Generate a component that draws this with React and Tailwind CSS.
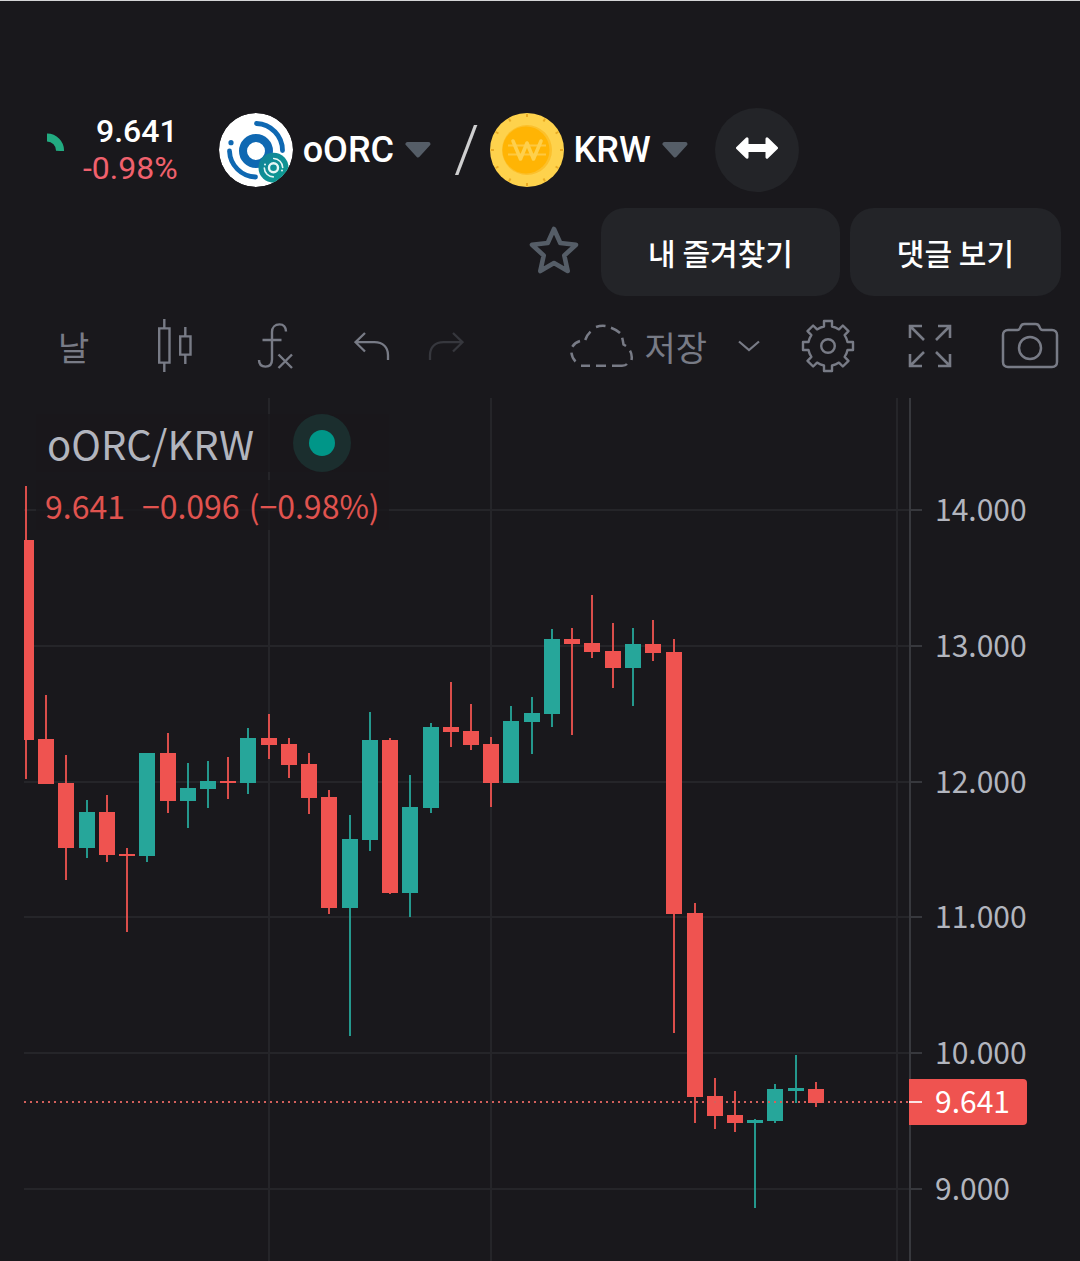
import { useState } from "react";

// [x, high, bodyTop, bodyBottom, low, rising]
const CANDLES = [
  [26, 486, 540, 740, 779, 0],
  [46, 695, 739, 784, 784, 0],
  [66, 755, 783, 848, 880, 0],
  [87, 800, 812, 848, 858, 1],
  [107, 795, 812, 855, 862, 0],
  [127, 848, 854, 856, 932, 0],
  [147, 753, 753, 856, 862, 1],
  [168, 733, 753, 801, 813, 0],
  [188, 763, 788, 801, 828, 1],
  [208, 761, 781, 789, 808, 1],
  [228, 757, 781, 783, 799, 0],
  [248, 728, 738, 783, 794, 1],
  [269, 714, 738, 745, 759, 0],
  [289, 738, 744, 765, 778, 0],
  [309, 753, 764, 798, 814, 0],
  [329, 790, 797, 908, 914, 0],
  [350, 815, 839, 908, 1036, 1],
  [370, 712, 740, 840, 851, 1],
  [390, 738, 740, 893, 894, 0],
  [410, 775, 807, 893, 917, 1],
  [431, 723, 727, 808, 813, 1],
  [451, 682, 727, 732, 747, 0],
  [471, 704, 731, 745, 750, 0],
  [491, 737, 744, 783, 807, 0],
  [511, 706, 721, 783, 783, 1],
  [532, 697, 713, 722, 754, 1],
  [552, 629, 639, 714, 727, 1],
  [572, 628, 639, 644, 735, 0],
  [592, 595, 643, 652, 658, 0],
  [613, 623, 651, 668, 688, 0],
  [633, 628, 644, 668, 706, 1],
  [653, 620, 644, 653, 661, 0],
  [674, 639, 652, 914, 1033, 0],
  [695, 903, 913, 1097, 1123, 0],
  [715, 1078, 1096, 1116, 1129, 0],
  [735, 1091, 1115, 1123, 1132, 0],
  [755, 1119, 1120, 1123, 1208, 1],
  [775, 1084, 1089, 1121, 1123, 1],
  [796, 1055, 1088, 1091, 1103, 1],
  [816, 1082, 1089, 1103, 1107, 0],
];

const PRICE_LEVELS = [
  { label: "14.000", y: 510 },
  { label: "13.000", y: 646 },
  { label: "12.000", y: 782 },
  { label: "11.000", y: 917 },
  { label: "10.000", y: 1053 },
  { label: "9.000", y: 1189 },
];

const TIME_LINES = [269, 491, 897];

const UP = "#26a69a";
const DOWN = "#ef5350";

export default function App() {
  const [favorite, setFavorite] = useState(false);

  return (
    <main className="min-h-screen flex flex-col bg-[#19181c] border-t border-[#d4d4d6] pt-[107px] text-white font-['Roboto','Noto_Sans_CJK_KR',sans-serif]">
      <PairHeader />

      <div className="mt-4 flex justify-end items-center pr-[19px]">
        <button
          type="button"
          aria-label="즐겨찾기"
          aria-pressed={favorite}
          onClick={() => setFavorite(!favorite)}
          className="mr-[22px]"
        >
          <StarIcon filled={favorite} />
        </button>
        <div className="flex gap-[10px] text-[30px] font-medium font-['Noto_Sans_CJK_KR',sans-serif]">
          <button type="button" className="h-[88px] px-[47px] rounded-3xl bg-[#232428]">
            내 즐겨찾기
          </button>
          <button type="button" className="h-[88px] px-[47px] rounded-3xl bg-[#232428]">
            댓글 보기
          </button>
        </div>
      </div>

      <Toolbar />
      <Chart />
    </main>
  );
}

function PairHeader() {
  return (
    <header className="h-[84px] flex items-center pl-[46px]">
      <svg width="18" height="18" viewBox="0 0 18 18" className="-mt-4" aria-hidden="true">
        <path d="M1 4.500A13 13 0 0 1 14 18" fill="none" stroke="#22ab81" strokeWidth="8" />
      </svg>

      <div className="ml-[19px] text-right text-[32px] leading-[37px]">
        <p className="font-medium">9.641</p>
        <p className="text-[#f0616d]">-0.98%</p>
      </div>

      <button type="button" className="ml-[41px] flex items-center text-4xl font-medium">
        <OrcLogo />
        <span className="ml-[10px]">oORC</span>
        <CaretIcon />
      </button>

      <span className="ml-[23px] mr-[10px] text-[64px] leading-none font-light text-[#cfcfd0]">/</span>

      <button type="button" className="flex items-center text-4xl font-medium">
        <WonCoin />
        <span className="ml-[10px]">KRW</span>
        <CaretIcon />
      </button>

      <button
        type="button"
        aria-label="통화 전환"
        className="ml-[27px] size-[84px] rounded-full bg-[#232428] flex items-center justify-center"
      >
        <svg width="44" height="24" viewBox="0 0 44 24" className="-mt-1" fill="#fff" stroke="#fff" strokeWidth="3" strokeLinejoin="round">
          <path d="M2.500 12 12 2.800V9.500H32V2.800L41.500 12 32 21.200V14.500H12V21.200Z" />
        </svg>
      </button>
    </header>
  );
}

function Toolbar() {
  return (
    <nav className="h-[102px] pb-[2px] pl-[58px] pr-[21px] flex items-center justify-between text-[#787b86] text-[34px] font-['Noto_Sans_CJK_KR',sans-serif]">
      <div className="flex items-center">
        <button type="button">날</button>

        <button type="button" aria-label="캔들" className="ml-[68px]">
          <svg width="36" height="54" viewBox="0 0 36 54" fill="none" stroke="currentColor" strokeWidth="2.400">
            <path d="M2.200 9.400H12.500V43.600H2.200ZM7.300 9V0M7.300 44V53M23.200 17.400H33.500V35.600H23.200ZM28.300 17V8M28.300 36V45" />
          </svg>
        </button>

        <button type="button" aria-label="지표" className="ml-16">
          <svg width="36" height="48" viewBox="0 0 36 48" fill="none" stroke="currentColor" strokeWidth="2.400">
            <path d="M29 9.500C29 5 26.500 2.400 22.500 2.400C18 2.400 15 5.500 15 10V37.500C15 42 12.500 44.600 8.500 44.600C4.500 44.600 2 42.500 2 38M5.500 18H24.500M21.500 32.500 35 46M35 32.500 21.500 46" />
          </svg>
        </button>

        <button type="button" aria-label="실행 취소" className="ml-[61px]">
          <UndoArrow />
        </button>
        <button type="button" aria-label="다시 실행" className="ml-[38px] text-[#36373d]">
          <span className="block -scale-x-100">
            <UndoArrow />
          </span>
        </button>
      </div>

      <div className="flex items-center">
        <button type="button" className="flex items-center">
          <svg width="64" height="44" viewBox="0 0 64 44" fill="none" stroke="currentColor" strokeWidth="2.500">
            <path d="M11 41.700H20M26 41.700H36M42 41.700H52Q55.500 41.700 57 40M5.500 37.500Q2 34 1.400 28.700M2.300 22.700Q5 18.500 10 17M15.200 16Q17 11 20.500 7.700M26 3Q31 1.200 35.500 1.900M41 3.700Q46 5.500 50 9M52.200 13.700Q53 17 53.500 20.500L56 22M60 26.700Q62.500 31 61.500 36" />
          </svg>
          <span className="ml-[10px]">저장</span>
        </button>

        <button type="button" aria-label="저장 메뉴" className="ml-[31px]">
          <svg width="22" height="12" viewBox="0 0 22 12" fill="none" stroke="currentColor" strokeWidth="2.200">
            <path d="M1 1.500 11 10 21 1.500" />
          </svg>
        </button>

        <button type="button" aria-label="설정" className="ml-[41px]">
          <svg width="54" height="54" viewBox="-27 -27 54 54" fill="none" stroke="currentColor" strokeWidth="2.400" strokeLinejoin="round">
            <path d={gearPath()} />
            <circle r="6.800" />
          </svg>
        </button>

        <button type="button" aria-label="전체 화면" className="ml-[53px]">
          <svg width="44" height="44" viewBox="0 0 44 44" fill="none" stroke="currentColor" strokeWidth="2.600">
            <path d="M14 2H2V14M2 2 16 16M30 2H42V14M42 2 28 16M14 42H2V30M2 42 16 28M30 42H42V30M42 42 28 28" />
          </svg>
        </button>

        <button type="button" aria-label="스냅샷" className="ml-[49px]">
          <svg width="58" height="48" viewBox="0 0 58 48" fill="none" stroke="currentColor" strokeWidth="2.500">
            <path d="M7 8H16.500C18.500 8 19 6.500 19.700 4.500C20.300 2.700 21.500 2 23.500 2H34.500C36.500 2 37.700 2.700 38.300 4.500C39 6.500 39.500 8 41.500 8H51C54 8 56 10 56 13V40C56 43 54 45 51 45H7C4 45 2 43 2 40V13C2 10 4 8 7 8Z" />
            <circle cx="29" cy="26" r="11" />
          </svg>
        </button>
      </div>
    </nav>
  );
}

function Chart() {
  return (
    <section className="flex-1 flex pl-6 font-['Noto_Sans_CJK_KR',sans-serif]">
      <div className="relative flex-1 flex">
        <svg className="w-full min-h-[860px]" role="img" aria-label="oORC/KRW">
          <g stroke="#252529" strokeWidth="2">
            {PRICE_LEVELS.map(({ y }) => (
              <line key={y} x1="0" x2="100%" y1={y - 398} y2={y - 398} />
            ))}
            {TIME_LINES.map((x) => (
              <line key={x} x1={x - 24} x2={x - 24} y1="0" y2="100%" />
            ))}
          </g>
          <g transform="translate(-24 -398)">
            {CANDLES.map(([x, high, top, bottom, low, rising]) => (
              <g key={x} fill={rising ? UP : DOWN}>
                <rect x={x - 1} y={high} width="2" height={low - high} opacity="0.9" />
                <rect x={x - 8} y={top} width="16" height={bottom - top} />
              </g>
            ))}
          </g>
          <line x1="0" x2="100%" y1="704" y2="704" stroke="#d4605c" strokeWidth="2" strokeDasharray="2 4" />
        </svg>

        <div className="absolute left-3 top-4">
          <div className="flex items-center h-[58px] pl-[11px] bg-[#19181c]/80">
            <h1 className="text-[40px] leading-none text-[#b2b5be]">oORC/KRW</h1>
            <span className="ml-[39px] size-[58px] rounded-full bg-[#1b2e2e] flex items-center justify-center">
              <span className="size-[26px] rounded-full bg-[#009688]" />
            </span>
          </div>
          <p className="mt-2 px-[9px] w-fit h-[50px] leading-[50px] flex bg-[#19181c]/80 text-[32px] text-[#e0534f]">
            <span>9.641</span>
            <span className="ml-[17px]">−0.096</span>
            <span className="ml-[9px]">(−0.98%)</span>
          </p>
        </div>
      </div>

      <svg className="w-[171px] shrink-0 min-h-[860px] text-[30px]">
        <line x1="1" x2="1" y1="0" y2="100%" stroke="#37383d" strokeWidth="2" />
        {PRICE_LEVELS.map(({ label, y }) => (
          <g key={label}>
            <line x1="0" x2="13" y1={y - 398} y2={y - 398} stroke="#37383d" strokeWidth="2" />
            <text x="26" y={y - 387} fill="#b2b5be">
              {label}
            </text>
          </g>
        ))}
        <path d="M0 681H114Q118 681 118 685V723Q118 727 114 727H0Z" fill={DOWN} />
        <line x1="0" x2="13" y1="704" y2="704" stroke="#fff" strokeWidth="2" opacity="0.85" />
        <text x="26" y="715" fill="#fff">
          9.641
        </text>
      </svg>
    </section>
  );
}

function CaretIcon() {
  return (
    <svg width="26" height="18" viewBox="0 0 26 18" className="ml-[11px]" fill="#555d67" stroke="#555d67" strokeWidth="4" strokeLinejoin="round" aria-hidden="true">
      <path d="M2.500 3H23.500L13 14.500Z" />
    </svg>
  );
}

function StarIcon({ filled }) {
  return (
    <svg width="50" height="48" viewBox="0 0 50 48" className="-mt-1" fill={filled ? "#555d67" : "none"} stroke="#555d67" strokeWidth="4.600" strokeLinejoin="round">
      <path d="M25 3 31.300 17 47 18.800 35.300 29.500 38.700 45 25 37 11.300 45 14.700 29.500 3 18.800 18.700 17Z" />
    </svg>
  );
}

function UndoArrow() {
  return (
    <svg width="36" height="28" viewBox="0 0 36 28" fill="none" stroke="currentColor" strokeWidth="2.300">
      <path d="M11 1 1.500 10.200 11 19.500M1.500 10.200H20.500C29 10.200 34 15.500 34 23V28" />
    </svg>
  );
}

function OrcLogo() {
  return (
    <svg width="74" height="74" viewBox="0 0 74 74" fill="none" strokeLinecap="round" aria-hidden="true">
      <defs>
        <clipPath id="logo-disc">
          <circle cx="37" cy="37" r="37" />
        </clipPath>
        <linearGradient id="badge-fill" x1="0" y1="0" x2="1" y2="1">
          <stop offset="0" stopColor="#127f9a" />
          <stop offset="1" stopColor="#0b9f8f" />
        </linearGradient>
      </defs>
      <g clipPath="url(#logo-disc)">
        <circle cx="37" cy="37" r="37" fill="#fff" />
        <g stroke="#0f68b2">
          <circle cx="37" cy="38" r="13" strokeWidth="8" />
          <path d="M37.500 10.500A27 27 0 0 1 63.500 37.500M10.500 38A27 27 0 0 0 36.500 64" strokeWidth="4.800" />
        </g>
        <circle cx="12" cy="29.700" r="2.600" fill="#0f68b2" />
        <circle cx="54.500" cy="54.700" r="15" fill="url(#badge-fill)" />
        <g stroke="#e6f6f5">
          <circle cx="54.500" cy="54.700" r="4.500" strokeWidth="2.400" />
          <path d="M54.700 45.500A9.200 9.200 0 0 1 63.700 54.500M45.300 55A9.200 9.200 0 0 0 54.300 63.900" strokeWidth="1.600" />
        </g>
        <circle cx="46" cy="51.500" r="1" fill="#e6f6f5" />
        <circle cx="63" cy="57.500" r="1" fill="#e6f6f5" />
      </g>
    </svg>
  );
}

function WonCoin() {
  const notches = [0, 30, 60, 90, 120, 150, 180, 210, 240, 270, 300, 330];

  return (
    <svg width="74" height="74" viewBox="0 0 74 74" fill="none" aria-hidden="true">
      <circle cx="37" cy="37" r="37" fill="#fed24c" />
      {notches.map((angle) => (
        <path key={angle} d="M37 1V4" stroke="#e9ab24" strokeWidth="2" transform={`rotate(${angle} 37 37)`} />
      ))}
      <circle cx="37" cy="37" r="25" fill="#fcc02b" />
      <circle cx="36" cy="37" r="23.500" fill="#ffb404" />
      <path d="M18 32.500H56M18 41.500H56" stroke="#fec840" strokeWidth="2" />
      <path d="M23 28 30.500 46 37 30 43.500 46 51 28" stroke="#fed04c" strokeWidth="3.600" strokeLinecap="round" strokeLinejoin="round" />
    </svg>
  );
}

// eight square teeth standing on a ring
function gearPath() {
  const base = 19.5;
  const tip = 25;
  const half = 4;
  const point = (along, across, angle) => {
    const x = along * Math.cos(angle) - across * Math.sin(angle);
    const y = along * Math.sin(angle) + across * Math.cos(angle);
    return `${x.toFixed(2)} ${y.toFixed(2)}`;
  };

  let d = "";
  for (let i = 0; i < 8; i++) {
    const angle = (i * Math.PI) / 4;
    d += i === 0 ? "M" : `A${base} ${base} 0 0 1 `;
    d += point(base, -half, angle);
    d += `L${point(tip, -half, angle)}L${point(tip, half, angle)}L${point(base, half, angle)}`;
  }
  return `${d}A${base} ${base} 0 0 1 ${point(base, -half, 0)}Z`;
}
